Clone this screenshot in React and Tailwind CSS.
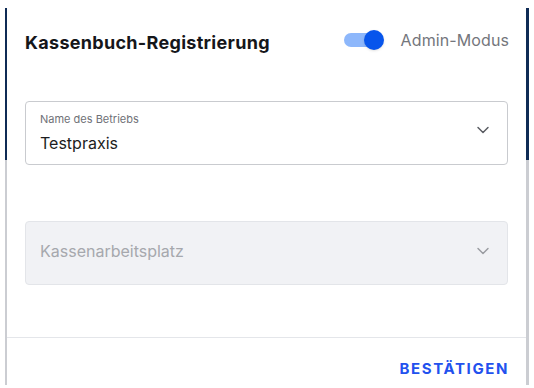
import { ChevronDown } from 'lucide-react';

const font = { fontFamily: 'Inter, "Noto Sans", sans-serif' };

const SelectBox = ({ label, value, disabled }) => (
  <div
    className={`flex items-center justify-between h-[64px] rounded-[4px] border pl-[14px] pr-[14px] ${
      disabled ? 'bg-[#f1f2f5] border-[#e3e5e9]' : 'bg-white border-[#c9cbcf]'
    }`}
  >
    {disabled ? (
      <span className="text-[16px] leading-6 text-[#a6a8ad] -mt-[4px]">{value}</span>
    ) : (
      <div className="flex flex-col">
        <span className="text-[11px] leading-[14px] text-[#6f7177]">{label}</span>
        <span className="text-[16px] leading-6 text-[#1c1d21] mt-[5px]">{value}</span>
      </div>
    )}
    <ChevronDown
      className={`w-5 h-5 ${disabled ? 'text-[#9a9ca1] -mt-[4px]' : 'text-[#5a5c62] -mt-[6px]'}`}
      strokeWidth={1.75}
    />
  </div>
);

const Strip = ({ width }) => (
  <div className={`flex flex-col ${width}`}>
    <div className="h-[152px] bg-[#0f2b55]" />
    <div className="flex-1 bg-[#cbcdd2] mb-[3px]" />
  </div>
);

export default function App() {
  return (
    <div className="w-[534px] h-[388px] bg-white pt-2 pl-[5px] pr-[5px] flex" style={font}>
      <Strip width="w-[2px]" />
      <div className="flex-1 flex flex-col bg-white">
        <div className="flex items-center justify-between h-6 mt-[22px] pl-[18px] pr-[17px]">
          <h1 className="text-[18px] font-bold text-[#15161a] tracking-[0.3px]">
            Kassenbuch-Registrierung
          </h1>
          <div className="flex items-center gap-[23px] -mt-[4px]">
            <div className="relative w-[34px] h-[14px] rounded-full bg-[#8db7fb]">
              <div className="absolute top-[-3px] left-[20px] w-5 h-5 rounded-full bg-[#0755ec] shadow-sm" />
            </div>
            <span className="text-[16px] text-[#74767c] tracking-[0.1px]">Admin-Modus</span>
          </div>
        </div>

        <div className="mt-[47px] pl-[18px] pr-[18px]">
          <SelectBox label="Name des Betriebs" value="Testpraxis" />
        </div>

        <div className="mt-[56px] pl-[18px] pr-[18px]">
          <SelectBox value="Kassenarbeitsplatz" disabled />
        </div>

        <div className="mt-[52px] border-t border-[#e4e6ea] flex-1 flex justify-end items-start pr-[17px]">
          <button className="mt-[20px] text-[15px] font-bold tracking-[1.6px] text-[#2251ee]">
            BESTÄTIGEN
          </button>
        </div>
      </div>
      <Strip width="w-[3px]" />
    </div>
  );
}
